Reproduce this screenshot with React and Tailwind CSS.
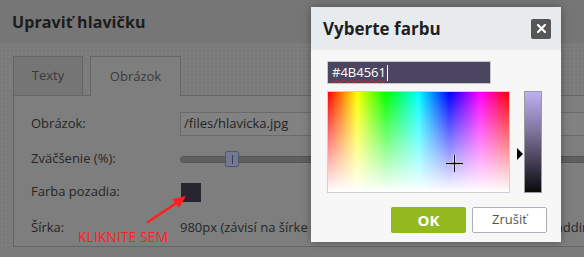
export default function App() {
  return (
    <div className="relative w-[584px] h-[257px] overflow-hidden bg-[#7b7b7b] font-['Open_Sans',sans-serif] text-[13px] text-[#262626]">
      {/* page header */}
      <div className="h-[43px] bg-[#767676] px-[12px] flex items-center">
        <h1 className="text-[16px] font-bold text-[#1c1c1c] tracking-[0.1px]">Upraviť hlavičku</h1>
      </div>

      {/* page body */}
      <div className="pt-[12px] pl-[13px] bg-[radial-gradient(circle,#848484_0.6px,transparent_0.8px)] bg-size-[4px_4px]">
        <div className="flex items-end gap-[7px] h-[40px]">
          <div className="w-[70px] h-[39px] border border-b-0 border-[#666] bg-[#757575] flex items-center justify-center text-[#3a3a3a]">
            Texty
          </div>
          <div className="w-[91px] h-[40px] -mb-px border border-b-0 border-[#666] bg-[#7e7e7e] flex items-center justify-center text-[#3a3a3a] relative z-10">
            Obrázok
          </div>
        </div>

        <div className="w-[620px] h-[152px] border border-[#666] bg-[#7e7e7e] pl-[17px] pt-[16px] flex flex-col">
          <div className="flex items-center h-[24px]">
            <span className="w-[149px]">Obrázok:</span>
            <div className="flex-1 h-[24px] border border-[#6a6a6a] bg-[#828282] flex items-center pl-[3px] text-[#222]">
              /files/hlavicka.jpg
            </div>
          </div>

          <div className="flex items-center h-[24px] mt-[11px]">
            <span className="w-[149px]">Zväčšenie (%):</span>
            <div className="relative flex-1 h-[24px] flex items-center">
              <div className="w-full h-[7px] rounded-full bg-[#5f5f5f] border border-[#555]" />
              <div className="absolute left-[45px] top-[4px] w-[14px] h-[16px] rounded-[2px] bg-[#737895] border border-[#50566e] flex items-center justify-center">
                <div className="w-px h-[9px] bg-[#3c4050]" />
              </div>
            </div>
          </div>

          <div className="flex items-center h-[24px] mt-[9px]">
            <span className="w-[149px]">Farba pozadia:</span>
            <div className="w-[20px] h-[19px] bg-[#27232f] ml-px" />
          </div>

          <div className="flex items-center h-[24px] mt-[12px] whitespace-nowrap">
            <span className="w-[149px] shrink-0">Šírka:</span>
            <span className="text-[#262626]">980px (závisí na šírke obsahu stránky mínus ľavý a tiež pravý padding)</span>
          </div>
        </div>
      </div>

      {/* annotation */}
      <div className="absolute left-[78px] top-[227px] text-[14px] leading-[19px] text-[#ff1f1f]">
        KLIKNITE SEM
      </div>
      <svg className="absolute left-0 top-0" width="584" height="257" viewBox="0 0 584 257">
        <line x1="148" y1="222" x2="178" y2="202" stroke="#ff1f1f" strokeWidth="2.6" strokeLinecap="round" />
        <polygon points="186,196 172,199 179,208" fill="#ff1f1f" />
      </svg>

      {/* colour dialog */}
      <div className="absolute left-[311px] top-[7px] w-[250px] h-[235px] bg-[#f7f7f7] shadow-[0_0_8px_rgba(0,0,0,0.35)] flex flex-col">
        <div className="h-[43px] bg-[#e8ebee] pl-[12px] pr-[10px] flex items-center justify-between">
          <span className="text-[17px] font-bold text-[#1f1f1f]">Vyberte farbu</span>
          <button className="w-[20px] h-[20px] rounded-[2px] bg-[#565656] flex items-center justify-center">
            <svg width="9" height="9" viewBox="0 0 9 9">
              <path d="M1 1L8 8M8 1L1 8" stroke="#fff" strokeWidth="2.2" strokeLinecap="square" />
            </svg>
          </button>
        </div>

        <div className="pl-[16px] pr-[14px] pt-[11px] flex flex-col">
          <div className="w-[164px] h-[23px] bg-[#4b4561] border border-[#c8c8c8] flex items-center pl-[4px] text-white text-[13px]">
            <span className="underline decoration-wavy decoration-[#e02020] decoration-1 underline-offset-2">#4B4561</span>
            <span className="w-px h-[16px] bg-white ml-px" />
          </div>

          <div className="flex mt-[7px]">
            <div className="relative w-[183px] h-[102px] border border-[#cfcfcf] bg-[linear-gradient(to_top,#fff,rgba(255,255,255,0)),linear-gradient(to_right,#f00,#ff0_16%,#0f0_32%,#0ff_50%,#00f_67%,#f0f_84%,#f00)]">
              <svg className="absolute left-[118px] top-[63px]" width="17" height="17" viewBox="0 0 17 17">
                <path d="M8.5 0V17M0 8.5H17" stroke="#fff" strokeWidth="3" />
                <path d="M8.5 0V17M0 8.5H17" stroke="#000" strokeWidth="1.3" />
              </svg>
            </div>
            <div className="w-[14px] relative">
              <svg className="absolute left-[7px] top-[57px]" width="6" height="12" viewBox="0 0 6 12">
                <polygon points="0,0 6,6 0,12" fill="#000" />
              </svg>
            </div>
            <div className="w-[18px] h-[102px] border border-[#9a9a9a] bg-[linear-gradient(to_bottom,#bdb0f5,#7d7399_40%,#3a3549_75%,#0a0a0a)]" />
          </div>

          <div className="flex justify-end gap-[6px] mt-[14px]">
            <button className="w-[75px] h-[26px] rounded-[2px] bg-[#93b91e] text-white font-bold text-[15px] flex items-center justify-center">
              OK
            </button>
            <button className="w-[75px] h-[26px] rounded-[2px] bg-white border border-[#aab0b8] text-[#555] text-[13px] flex items-center justify-center">
              Zrušiť
            </button>
          </div>
        </div>
      </div>
    </div>
  );
}
